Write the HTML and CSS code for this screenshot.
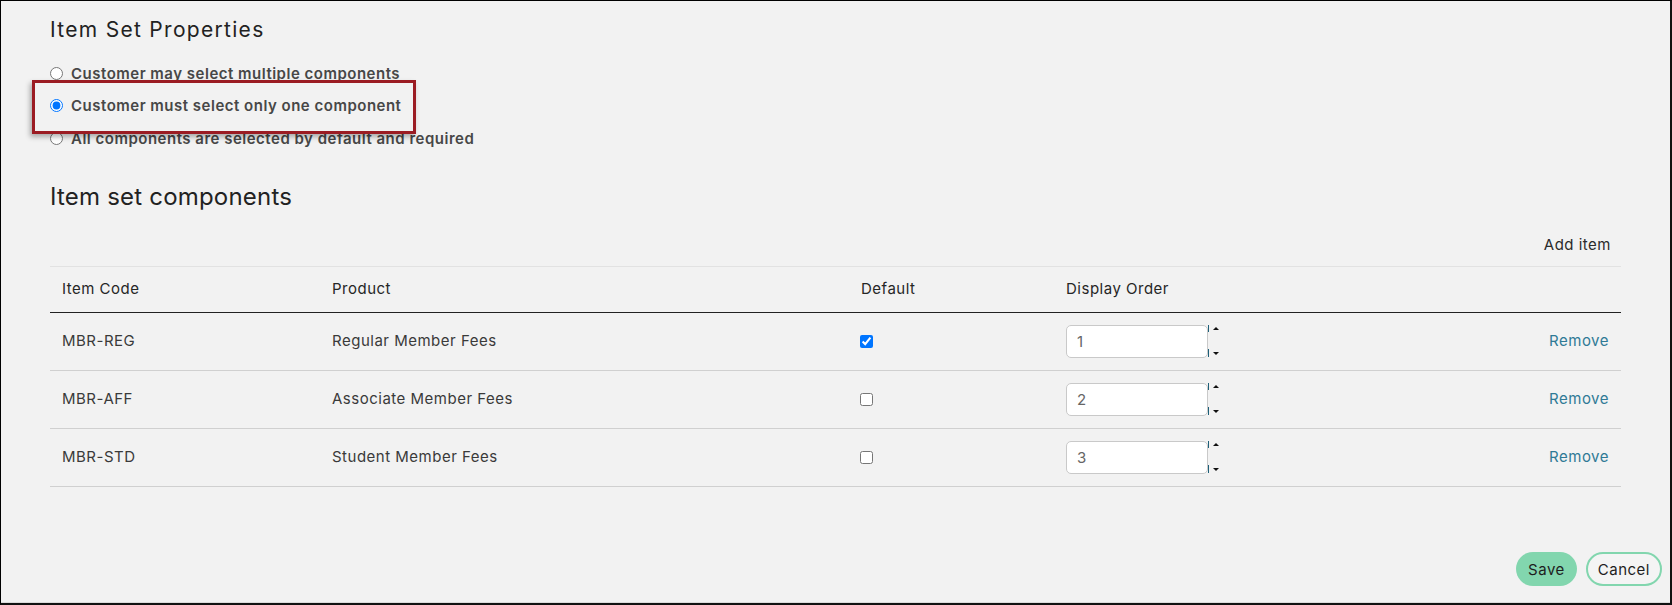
FILE: index.html
```html
<!DOCTYPE html>
<html lang="en">
<head>
<meta charset="utf-8">
<title>Item Set Properties</title>
<link rel="stylesheet" href="styles.css">
</head>
<body>
<div class="frame">
  <div class="content">
    <h1 class="section-title">Item Set Properties</h1>

    <div class="choice-list">
      <label class="choice"><input type="radio" name="select-mode"><span>Customer may select multiple components</span></label>
      <label class="choice choice--flagged"><input type="radio" name="select-mode" checked><span>Customer must select only one component</span></label>
      <label class="choice"><input type="radio" name="select-mode"><span>All components are selected by default and required</span></label>
    </div>

    <h2 class="section-title section-title--lg">Item set components</h2>

    <div class="toolbar"><a class="toolbar-link" href="#">Add item</a></div>

    <div class="grid" role="table">
      <div class="grid-row grid-head" role="row">
        <div class="cell" role="columnheader">Item Code</div>
        <div class="cell" role="columnheader">Product</div>
        <div class="cell" role="columnheader">Default</div>
        <div class="cell" role="columnheader">Display Order</div>
        <div class="cell" role="columnheader"></div>
      </div>

      <div class="grid-row grid-body" role="row">
        <div class="cell">MBR-REG</div>
        <div class="cell">Regular Member Fees</div>
        <div class="cell cell--check"><input type="checkbox" checked></div>
        <div class="cell cell--order">
          <input class="order-input" type="text" value="1">
          <svg class="spin" width="14" height="33" viewBox="0 0 14 33"><path d="M0.5 0v7M0.5 24v8" stroke="#1d5f78" stroke-width="1"/><path d="M5 5h6l-3-3z" fill="#111"/><path d="M5 27h6l-3 3z" fill="#111"/></svg>
        </div>
        <div class="cell cell--end"><a class="row-link" href="#">Remove</a></div>
      </div>

      <div class="grid-row grid-body" role="row">
        <div class="cell">MBR-AFF</div>
        <div class="cell">Associate Member Fees</div>
        <div class="cell cell--check"><input type="checkbox"></div>
        <div class="cell cell--order">
          <input class="order-input" type="text" value="2">
          <svg class="spin" width="14" height="33" viewBox="0 0 14 33"><path d="M0.5 0v7M0.5 24v8" stroke="#1d5f78" stroke-width="1"/><path d="M5 5h6l-3-3z" fill="#111"/><path d="M5 27h6l-3 3z" fill="#111"/></svg>
        </div>
        <div class="cell cell--end"><a class="row-link" href="#">Remove</a></div>
      </div>

      <div class="grid-row grid-body" role="row">
        <div class="cell">MBR-STD</div>
        <div class="cell">Student Member Fees</div>
        <div class="cell cell--check"><input type="checkbox"></div>
        <div class="cell cell--order">
          <input class="order-input" type="text" value="3">
          <svg class="spin" width="14" height="33" viewBox="0 0 14 33"><path d="M0.5 0v7M0.5 24v8" stroke="#1d5f78" stroke-width="1"/><path d="M5 5h6l-3-3z" fill="#111"/><path d="M5 27h6l-3 3z" fill="#111"/></svg>
        </div>
        <div class="cell cell--end"><a class="row-link" href="#">Remove</a></div>
      </div>
    </div>
  </div>

  <div class="actions">
    <button class="btn btn--primary" type="button">Save</button>
    <button class="btn btn--outline" type="button">Cancel</button>
  </div>
</div>
</body>
</html>
```

FILE: styles.css
```css
* {
  box-sizing: border-box;
}

html,
body {
  margin: 0;
  padding: 0;
  background: #f2f2f2;
}

body {
  font-family: Inter, "Open Sans", "Liberation Sans", sans-serif;
  font-size: 15px;
  letter-spacing: 0.5px;
  color: #333;
}

/* outer panel */
.frame {
  width: 1672px;
  height: 605px;
  display: flex;
  flex-direction: column;
  padding: 15px 8px 17px 8px;
  background: #f2f2f2;
  border-top: 1px solid #000;
  border-left: 1px solid #000;
  border-right: 2px solid #111;
  border-bottom: 2px solid #111;
  box-shadow: inset 0 -1px 0 #dadada;
}

.content {
  padding: 0 41px;
}

/* headings */
.section-title {
  margin: 0;
  font-size: 21px;
  line-height: 28px;
  font-weight: 400;
  letter-spacing: 1.3px;
  color: #222;
}

.section-title--lg {
  margin-top: 26px;
  font-size: 24px;
  line-height: 32px;
  letter-spacing: 0.2px;
}

/* selection mode options */
.choice-list {
  margin-top: 13px;
  display: flex;
  flex-direction: column;
}

.choice {
  height: 32.5px;
  display: flex;
  align-items: center;
  gap: 8px;
  font-weight: 600;
  letter-spacing: 0.5px;
  color: #474747;
}

.choice input {
  margin: 0;
  width: 13px;
  height: 13px;
}

.choice--flagged {
  position: relative;
}

.choice--flagged::before {
  content: "";
  position: absolute;
  left: -18px;
  top: -9.5px;
  width: 378px;
  height: 48px;
  border: 3px solid #9b1c23;
  box-shadow: -2px 3px 5px rgba(0, 0, 0, 0.3);
  pointer-events: none;
}

/* component list */
.toolbar {
  display: flex;
  justify-content: flex-end;
  padding: 22px 10px 11px 0;
  line-height: 20px;
}

.toolbar-link {
  color: #2b2b2b;
  text-decoration: none;
}

.grid-row {
  display: grid;
  grid-template-columns: 270px 529px 205px 1fr auto;
  align-items: center;
}

.grid-head {
  height: 47px;
  border-top: 1px solid #e2e2e2;
  border-bottom: 1px solid #222;
  color: #262626;
}

.grid-body {
  height: 58px;
  border-bottom: 1px solid #d0d0d0;
  color: #3a3a3a;
}

.cell {
  padding-left: 12px;
  line-height: 20px;
}

.cell--check {
  padding-left: 11px;
  display: flex;
  align-items: center;
}

.cell--check input {
  margin: 0;
  width: 13px;
  height: 13px;
}

.cell--order {
  display: flex;
  align-items: center;
}

.order-input {
  width: 142px;
  height: 33px;
  padding: 0 10px;
  border: 1px solid #c9c9c9;
  border-radius: 5px;
  background: #fff;
  font-family: inherit;
  font-size: 15px;
  color: #666;
  outline: none;
}

.spin {
  display: block;
  flex: none;
}

.cell--end {
  display: flex;
  justify-content: flex-end;
  padding-right: 12px;
}

.row-link {
  color: #2f7a96;
  text-decoration: none;
}

/* footer buttons */
.actions {
  margin-top: auto;
  display: flex;
  justify-content: flex-end;
  gap: 9px;
}

.btn {
  height: 34px;
  border-radius: 17px;
  font-family: inherit;
  font-size: 15px;
  letter-spacing: 0.5px;
  color: #1e1e1e;
  cursor: pointer;
}

.btn--primary {
  padding: 0 12px;
  border: none;
  background: #82d6ae;
}

.btn--outline {
  padding: 0 10px;
  border: 2px solid #82d6ae;
  background: #f4f4f4;
}
```
